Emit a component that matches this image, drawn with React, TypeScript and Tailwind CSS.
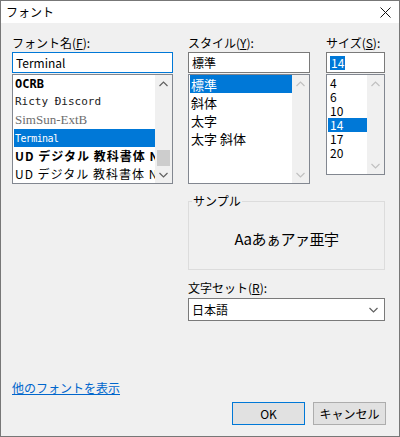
function Chevron({ up, color }: { up?: boolean; color: string }) {
  return (
    <svg width="9" height="6" viewBox="0 0 9 6">
      <polyline
        points={up ? "0.5,5 4.5,1 8.5,5" : "0.5,1 4.5,5 8.5,1"}
        fill="none"
        stroke={color}
        strokeWidth="1.2"
      />
    </svg>
  );
}

function ScrollBar({ color, thumb }: { color: string; thumb?: boolean }) {
  return (
    <div className="w-[17px] h-full bg-[#f0f0f0] flex flex-col">
      <div className="h-[17px] flex items-center justify-center">
        <Chevron up color={color} />
      </div>
      <div className="flex-1 flex flex-col justify-end">
        {thumb && <div className="mx-[2px] h-[16px] bg-[#cdcdcd]" />}
      </div>
      <div className="h-[17px] flex items-center justify-center">
        <Chevron color={color} />
      </div>
    </div>
  );
}

function Label({ text, acc }: { text: string; acc: string }) {
  return (
    <div className="h-[16px] leading-[16px] text-[12px] text-black whitespace-nowrap">
      {text}(<span className="underline">{acc}</span>):
    </div>
  );
}

export default function App() {
  return (
    <div className="w-[400px] h-[437px] bg-[#f0f0f0] border border-[#777777] flex flex-col font-['Noto_Sans_CJK_JP',sans-serif] text-[12px] text-black overflow-hidden">
      {/* title bar */}
      <div className="h-[22px] bg-white flex items-center justify-between pl-[5px] pr-[8px]">
        <span className="text-[12px] leading-none">フォント</span>
        <svg width="11" height="11" viewBox="0 0 11 11">
          <path d="M0.5 0.5 L10.5 10.5 M10.5 0.5 L0.5 10.5" stroke="#111" strokeWidth="1" />
        </svg>
      </div>

      <div className="flex-1 flex flex-col px-[11px]">
        {/* top row: font / style / size */}
        <div className="flex mt-[12px]">
          {/* font name */}
          <div className="w-[161px] flex flex-col">
            <Label text="フォント名" acc="F" />
            <div className="mt-[1px] h-[21px] border border-[#0078d7] bg-white flex items-center pl-[3px] leading-none">
              Terminal
            </div>
            <div className="mt-[1px] h-[110px] border border-[#828790] bg-white flex">
              <div className="flex-1 flex flex-col pl-[1px] overflow-hidden">
                <div className="h-[18px] flex items-center pl-[1px] font-['DejaVu_Sans_Mono',monospace] text-[12px] font-bold">OCRB</div>
                <div className="h-[18px] flex items-center pl-[1px] font-['DejaVu_Sans_Mono',monospace] text-[11px] text-[#222]">Ricty Điscord</div>
                <div className="h-[18px] flex items-center pl-[1px] font-['Liberation_Serif',serif] text-[13px] text-[#6d6d6d]">SimSun-ExtB</div>
                <div className="h-[18px] flex items-center pl-[1px] bg-[#0078d7] text-white font-['DejaVu_Sans_Mono',monospace] text-[10px] tracking-[-0.6px]">Terminal</div>
                <div className="h-[18px] flex items-center pl-[1px] whitespace-pre font-bold text-[12px] tracking-[1px]">UD デジタル 教科書体 N-B</div>
                <div className="h-[18px] flex items-center pl-[1px] whitespace-pre text-[12px] tracking-[1px]">UD デジタル 教科書体 N-R</div>
              </div>
              <ScrollBar color="#606060" thumb />
            </div>
          </div>

          {/* style */}
          <div className="w-[122px] ml-[15px] flex flex-col">
            <Label text="スタイル" acc="Y" />
            <div className="mt-[1px] h-[21px] border border-[#7a7a7a] bg-white flex items-center pl-[3px] leading-none">
              標準
            </div>
            <div className="mt-[1px] h-[110px] border border-[#828790] bg-white flex">
              <div className="flex-1 flex flex-col pl-[1px]">
                <div className="h-[18px] flex items-center pl-[1px] bg-[#0078d7] text-white text-[13px] leading-none">標準</div>
                <div className="h-[18px] flex items-center pl-[1px] text-[13px] leading-none">斜体</div>
                <div className="h-[18px] flex items-center pl-[1px] text-[13px] leading-none">太字</div>
                <div className="h-[18px] flex items-center pl-[1px] text-[13px] leading-none whitespace-pre">太字 斜体</div>
              </div>
              <ScrollBar color="#c0c0c0" />
            </div>
          </div>

          {/* size */}
          <div className="w-[59px] ml-[16px] flex flex-col">
            <Label text="サイズ" acc="S" />
            <div className="mt-[1px] h-[21px] border border-[#7a7a7a] bg-white flex items-center pl-[3px] leading-none">
              <span className="bg-[#0078d7] text-white px-[1px] py-[1px]">14</span>
            </div>
            <div className="mt-[1px] h-[101px] border border-[#828790] bg-white flex">
              <div className="flex-1 flex flex-col pt-[1px] pl-[1px]">
                {["4", "6", "10", "14", "17", "20"].map((s) => (
                  <div
                    key={s}
                    className={
                      s === "14"
                        ? "h-[14px] flex items-center pl-[2px] bg-[#0078d7] text-white text-[12px] leading-none"
                        : "h-[14px] flex items-center pl-[2px] text-[12px] leading-none"
                    }
                  >
                    {s}
                  </div>
                ))}
              </div>
              <ScrollBar color="#c0c0c0" />
            </div>
          </div>
        </div>

        {/* sample + charset */}
        <div className="ml-[176px] w-[197px] flex flex-col">
          <div className="mt-[17px] h-[69px] border border-[#dcdcdc] relative flex items-center justify-center">
            <span className="absolute left-[3px] top-[-9px] bg-[#f0f0f0] px-[1px] text-[12px] leading-[16px]">サンプル</span>
            <span className="text-[15px] tracking-[-0.5px] mt-[8px]">Aaあぁアァ亜宇</span>
          </div>
          <div className="mt-[10px]">
            <Label text="文字セット" acc="R" />
          </div>
          <div className="mt-[2px] h-[23px] border border-[#7a7a7a] bg-white flex items-center justify-between pl-[3px] pr-[6px]">
            <span>日本語</span>
            <Chevron color="#606060" />
          </div>
        </div>

        {/* link */}
        <div className="mt-[59px] h-[16px] leading-[16px]">
          <span className="text-[#0066cc] underline">他のフォントを表示</span>
        </div>

        {/* buttons */}
        <div className="mt-[6px] flex justify-end gap-[8px] pr-[2px]">
          <div className="w-[73px] h-[23px] border border-[#0078d7] bg-[#e1e1e1] flex items-center justify-center">OK</div>
          <div className="w-[73px] h-[23px] border border-[#adadad] bg-[#e1e1e1] flex items-center justify-center">キャンセル</div>
        </div>
      </div>
    </div>
  );
}
